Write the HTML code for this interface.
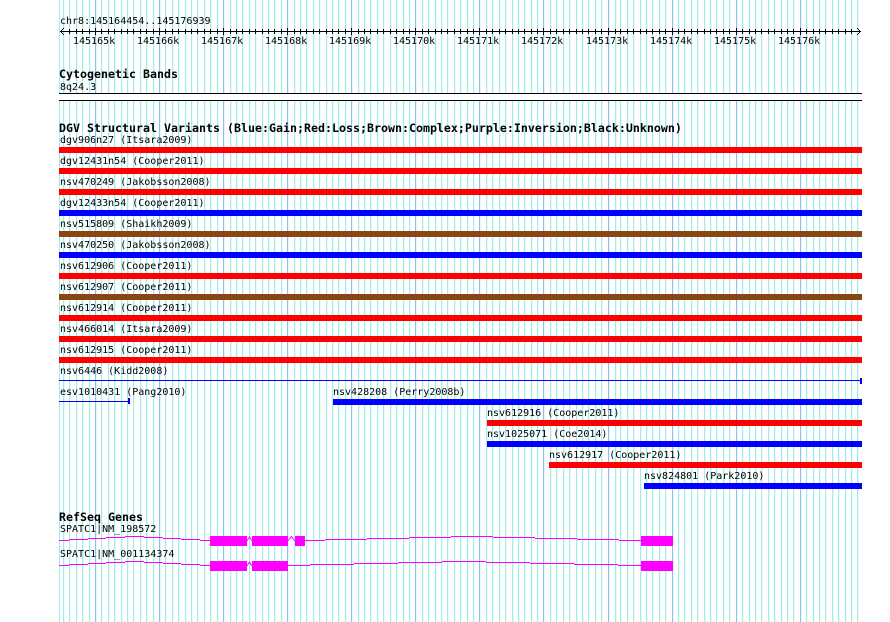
<!DOCTYPE html>
<html><head><meta charset="utf-8"><style>
html,body{margin:0;padding:0;background:#fff;width:890px;height:622px;overflow:hidden}
svg{display:block;position:absolute;left:0;top:0}
text{font-family:"DejaVu Sans Mono","Liberation Mono",monospace;font-size:10px;fill:#000;white-space:pre}
text.b{font-weight:bold;font-size:11.63px}
</style></head><body>
<svg width="890" height="622" viewBox="0 0 890 622" xmlns="http://www.w3.org/2000/svg">
<defs>
<clipPath id="c1"><rect x="60" y="29" width="802" height="5"/></clipPath>
<clipPath id="c2"><rect x="60" y="28" width="802" height="7"/></clipPath>
</defs>
<g shape-rendering="crispEdges" fill="none">
<path stroke="#a4ecec" d="M59.5 0V622"/>
<use href="#mn" x="1" opacity=".25"/>
<use href="#mj" x="1" opacity=".2"/>
<path id="mn" stroke="#a4ecec" d="M63.5 0V622M69.5 0V622M76.5 0V622M82.5 0V622M89.5 0V622M101.5 0V622M108.5 0V622M114.5 0V622M121.5 0V622M127.5 0V622M133.5 0V622M140.5 0V622M146.5 0V622M153.5 0V622M165.5 0V622M172.5 0V622M178.5 0V622M185.5 0V622M191.5 0V622M197.5 0V622M204.5 0V622M210.5 0V622M217.5 0V622M230.5 0V622M236.5 0V622M242.5 0V622M249.5 0V622M255.5 0V622M262.5 0V622M268.5 0V622M274.5 0V622M281.5 0V622M294.5 0V622M300.5 0V622M306.5 0V622M313.5 0V622M319.5 0V622M326.5 0V622M332.5 0V622M338.5 0V622M345.5 0V622M358.5 0V622M364.5 0V622M370.5 0V622M377.5 0V622M383.5 0V622M390.5 0V622M396.5 0V622M403.5 0V622M409.5 0V622M422.5 0V622M428.5 0V622M435.5 0V622M441.5 0V622M447.5 0V622M454.5 0V622M460.5 0V622M467.5 0V622M473.5 0V622M486.5 0V622M492.5 0V622M499.5 0V622M505.5 0V622M512.5 0V622M518.5 0V622M524.5 0V622M531.5 0V622M537.5 0V622M550.5 0V622M556.5 0V622M563.5 0V622M569.5 0V622M576.5 0V622M582.5 0V622M588.5 0V622M595.5 0V622M601.5 0V622M615.5 0V622M620.5 0V622M627.5 0V622M633.5 0V622M640.5 0V622M646.5 0V622M652.5 0V622M659.5 0V622M665.5 0V622M678.5 0V622M684.5 0V622M691.5 0V622M697.5 0V622M704.5 0V622M710.5 0V622M716.5 0V622M723.5 0V622M729.5 0V622M742.5 0V622M749.5 0V622M755.5 0V622M761.5 0V622M768.5 0V622M774.5 0V622M781.5 0V622M787.5 0V622M793.5 0V622M806.5 0V622M813.5 0V622M819.5 0V622M825.5 0V622M832.5 0V622M838.5 0V622M845.5 0V622M851.5 0V622M857.5 0V622"/>
<path id="mj" stroke="#84c6ea" d="M95.5 0V622M159.5 0V622M223.5 0V622M287.5 0V622M351.5 0V622M415.5 0V622M479.5 0V622M543.5 0V622M608.5 0V622M672.5 0V622M736.5 0V622M800.5 0V622"/>
<rect x="59" y="94" width="803" height="6" fill="#fff"/>
<path stroke="#000" d="M59 93.5H862M59 100.5H862"/>
<path stroke="#000" d="M60 31.5H861"/>
<g clip-path="url(#c1)"><path stroke="#000" d="M69.5 0V622M76.5 0V622M82.5 0V622M89.5 0V622M101.5 0V622M108.5 0V622M114.5 0V622M121.5 0V622M127.5 0V622M133.5 0V622M140.5 0V622M146.5 0V622M153.5 0V622M165.5 0V622M172.5 0V622M178.5 0V622M185.5 0V622M191.5 0V622M197.5 0V622M204.5 0V622M210.5 0V622M217.5 0V622M230.5 0V622M236.5 0V622M242.5 0V622M249.5 0V622M255.5 0V622M262.5 0V622M268.5 0V622M274.5 0V622M281.5 0V622M294.5 0V622M300.5 0V622M306.5 0V622M313.5 0V622M319.5 0V622M326.5 0V622M332.5 0V622M338.5 0V622M345.5 0V622M358.5 0V622M364.5 0V622M370.5 0V622M377.5 0V622M383.5 0V622M390.5 0V622M396.5 0V622M403.5 0V622M409.5 0V622M422.5 0V622M428.5 0V622M435.5 0V622M441.5 0V622M447.5 0V622M454.5 0V622M460.5 0V622M467.5 0V622M473.5 0V622M486.5 0V622M492.5 0V622M499.5 0V622M505.5 0V622M512.5 0V622M518.5 0V622M524.5 0V622M531.5 0V622M537.5 0V622M550.5 0V622M556.5 0V622M563.5 0V622M569.5 0V622M576.5 0V622M582.5 0V622M588.5 0V622M595.5 0V622M601.5 0V622M615.5 0V622M620.5 0V622M627.5 0V622M633.5 0V622M640.5 0V622M646.5 0V622M652.5 0V622M659.5 0V622M665.5 0V622M678.5 0V622M684.5 0V622M691.5 0V622M697.5 0V622M704.5 0V622M710.5 0V622M716.5 0V622M723.5 0V622M729.5 0V622M742.5 0V622M749.5 0V622M755.5 0V622M761.5 0V622M768.5 0V622M774.5 0V622M781.5 0V622M787.5 0V622M793.5 0V622M806.5 0V622M813.5 0V622M819.5 0V622M825.5 0V622M832.5 0V622M838.5 0V622M845.5 0V622M851.5 0V622"/></g>
<g clip-path="url(#c2)"><path stroke="#000" d="M95.5 0V622M159.5 0V622M223.5 0V622M287.5 0V622M351.5 0V622M415.5 0V622M479.5 0V622M543.5 0V622M608.5 0V622M672.5 0V622M736.5 0V622M800.5 0V622"/></g>
<g stroke="none" fill="#000">
<rect x="60" y="31" width="1" height="1"/><rect x="61" y="30" width="1" height="1"/><rect x="61" y="32" width="1" height="1"/><rect x="62" y="29" width="1" height="1"/><rect x="62" y="33" width="1" height="1"/><rect x="63" y="28" width="1" height="1"/><rect x="63" y="34" width="1" height="1"/>
<rect x="860" y="31" width="1" height="1"/><rect x="859" y="30" width="1" height="1"/><rect x="859" y="32" width="1" height="1"/><rect x="858" y="29" width="1" height="1"/><rect x="858" y="33" width="1" height="1"/><rect x="857" y="28" width="1" height="1"/><rect x="857" y="34" width="1" height="1"/>
</g>
<g stroke="none">
<rect x="59" y="147" width="803" height="6" fill="#ff0000"/>
<rect x="59" y="168" width="803" height="6" fill="#ff0000"/>
<rect x="59" y="189" width="803" height="6" fill="#ff0000"/>
<rect x="59" y="210" width="803" height="6" fill="#0000ff"/>
<rect x="59" y="231" width="803" height="6" fill="#8b4513"/>
<rect x="59" y="252" width="803" height="6" fill="#0000ff"/>
<rect x="59" y="273" width="803" height="6" fill="#ff0000"/>
<rect x="59" y="294" width="803" height="6" fill="#8b4513"/>
<rect x="59" y="315" width="803" height="6" fill="#ff0000"/>
<rect x="59" y="336" width="803" height="6" fill="#ff0000"/>
<rect x="59" y="357" width="803" height="6" fill="#ff0000"/>
<rect x="59" y="380" width="803" height="1" fill="#0000ff"/>
<rect x="860" y="378" width="2" height="6" fill="#0000ff"/>
<rect x="59" y="401" width="70" height="1" fill="#0000ff"/>
<rect x="128" y="398" width="2" height="6" fill="#0000ff"/>
<rect x="333" y="399" width="529" height="6" fill="#0000ff"/>
<rect x="487" y="420" width="375" height="6" fill="#ff0000"/>
<rect x="487" y="441" width="375" height="6" fill="#0000ff"/>
<rect x="549" y="462" width="313" height="6" fill="#ff0000"/>
<rect x="644" y="483" width="218" height="6" fill="#0000ff"/>
<rect x="210" y="536" width="37" height="10" fill="#ff00ff"/>
<rect x="252" y="536" width="36" height="10" fill="#ff00ff"/>
<rect x="295" y="536" width="10" height="10" fill="#ff00ff"/>
<rect x="641" y="536" width="32" height="10" fill="#ff00ff"/>
<rect x="210" y="561" width="37" height="10" fill="#ff00ff"/>
<rect x="252" y="561" width="36" height="10" fill="#ff00ff"/>
<rect x="641" y="561" width="32" height="10" fill="#ff00ff"/>
</g>
<path stroke="#ff00ff" d="M59 540.5H69M69 539.5H88M88 538.5H106M106 537.5H125M125 536.5H144M144 537.5H163M163 538.5H181M181 539.5H200M200 540.5H210M305 540.5H325M325 539.5H367M367 538.5H409M409 537.5H451M451 536.5H493M493 537.5H535M535 538.5H577M577 539.5H619M619 540.5H641"/>
<path stroke="#ff00ff" d="M59 565.5H69M69 564.5H88M88 563.5H106M106 562.5H125M125 561.5H144M144 562.5H163M163 563.5H181M181 564.5H200M200 565.5H210M288 565.5H310M310 564.5H354M354 563.5H398M398 562.5H442M442 561.5H486M486 562.5H530M530 563.5H574M574 564.5H618M618 565.5H641"/>
</g>
<g fill="none" stroke="#ff00ff" stroke-width="1">
<path d="M247 541L249.5 537L252 541"/>
<path d="M288 541L291.5 536.5L295 541"/>
<path d="M247 566L249.5 562L252 566"/>
</g>
<text x="60" y="24">chr8:145164454..145176939</text>
<text x="73" y="44">145165k</text>
<text x="137" y="44">145166k</text>
<text x="201" y="44">145167k</text>
<text x="265" y="44">145168k</text>
<text x="329" y="44">145169k</text>
<text x="393" y="44">145170k</text>
<text x="457" y="44">145171k</text>
<text x="521" y="44">145172k</text>
<text x="586" y="44">145173k</text>
<text x="650" y="44">145174k</text>
<text x="714" y="44">145175k</text>
<text x="778" y="44">145176k</text>
<text class="b" x="59" y="78">Cytogenetic Bands</text>
<text x="60" y="90">8q24.3</text>
<text class="b" x="59" y="132">DGV Structural Variants (Blue:Gain;Red:Loss;Brown:Complex;Purple:Inversion;Black:Unknown)</text>
<text x="60" y="143">dgv906n27 (Itsara2009)</text>
<text x="60" y="164">dgv12431n54 (Cooper2011)</text>
<text x="60" y="185">nsv470249 (Jakobsson2008)</text>
<text x="60" y="206">dgv12433n54 (Cooper2011)</text>
<text x="60" y="227">nsv515809 (Shaikh2009)</text>
<text x="60" y="248">nsv470250 (Jakobsson2008)</text>
<text x="60" y="269">nsv612906 (Cooper2011)</text>
<text x="60" y="290">nsv612907 (Cooper2011)</text>
<text x="60" y="311">nsv612914 (Cooper2011)</text>
<text x="60" y="332">nsv466014 (Itsara2009)</text>
<text x="60" y="353">nsv612915 (Cooper2011)</text>
<text x="60" y="374">nsv6446 (Kidd2008)</text>
<text x="60" y="395">esv1010431 (Pang2010)</text>
<text x="333" y="395">nsv428208 (Perry2008b)</text>
<text x="487" y="416">nsv612916 (Cooper2011)</text>
<text x="487" y="437">nsv1025071 (Coe2014)</text>
<text x="549" y="458">nsv612917 (Cooper2011)</text>
<text x="644" y="479">nsv824801 (Park2010)</text>
<text class="b" x="59" y="521">RefSeq Genes</text>
<text x="60" y="532">SPATC1|NM_198572</text>
<text x="60" y="557">SPATC1|NM_001134374</text>
</svg>
</body></html>
